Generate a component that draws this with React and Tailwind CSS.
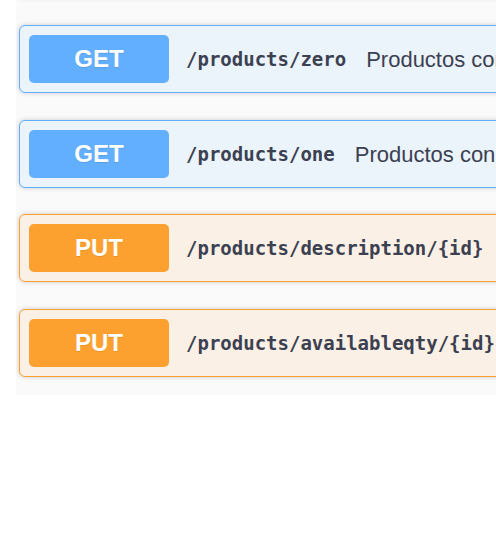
import React from "react";

// Swagger-like operation rows
const ops = [
  { method: "GET", path: "/products/zero", desc: "Productos con cantidad cero", mt: "mt-[27px]" },
  { method: "GET", path: "/products/one", desc: "Productos con cantidad uno", mt: "mt-[27px]" },
  { method: "PUT", path: "/products/description/{id}", desc: "", mt: "mt-[26px]" },
  { method: "PUT", path: "/products/availableqty/{id}", desc: "", mt: "mt-[27px]" },
];

const styles = {
  GET: {
    card: "border-[#61affe] bg-[#ebf3fb]",
    badge: "bg-[#61affe]",
  },
  PUT: {
    card: "border-[#fca130] bg-[#fbf0e5]",
    badge: "bg-[#fca130]",
  },
};

const OpBlock = ({ method, path, desc, className }) => (
  <div
    className={`flex items-center h-[68px] rounded-[6px] border p-[9px] shadow-[0_0_5px_rgba(0,0,0,0.19)] ${styles[method].card} ${className}`}
  >
    <div
      className={`flex shrink-0 items-center justify-center w-[140px] h-[48px] rounded-[5px] text-white font-bold text-[24px] font-['Liberation_Sans',Arial,sans-serif] [text-shadow:0_1px_0_rgba(0,0,0,0.1)] ${styles[method].badge}`}
    >
      {method}
    </div>
    <span className="pl-[17px] pr-[20px] whitespace-nowrap font-bold text-[19px] text-[#3b4151] font-['DejaVu_Sans_Mono',monospace]">
      {path}
    </span>
    {desc && (
      <span className="whitespace-nowrap text-[22px] text-[#3b4151] font-['Liberation_Sans',Arial,sans-serif]">
        {desc}
      </span>
    )}
  </div>
);

export default function App() {
  return (
    <div className="w-[496px] h-[557px] overflow-hidden bg-white">
      <div className="ml-[16px] w-[900px] bg-[#fafafa] flex flex-col pl-[3px] pb-[18px]">
        <OpBlock method="GET" path="/products" desc="" className="-mt-[70px]" />
        {ops.map((op) => (
          <OpBlock key={op.path} {...op} className={op.mt} />
        ))}
      </div>
    </div>
  );
}
